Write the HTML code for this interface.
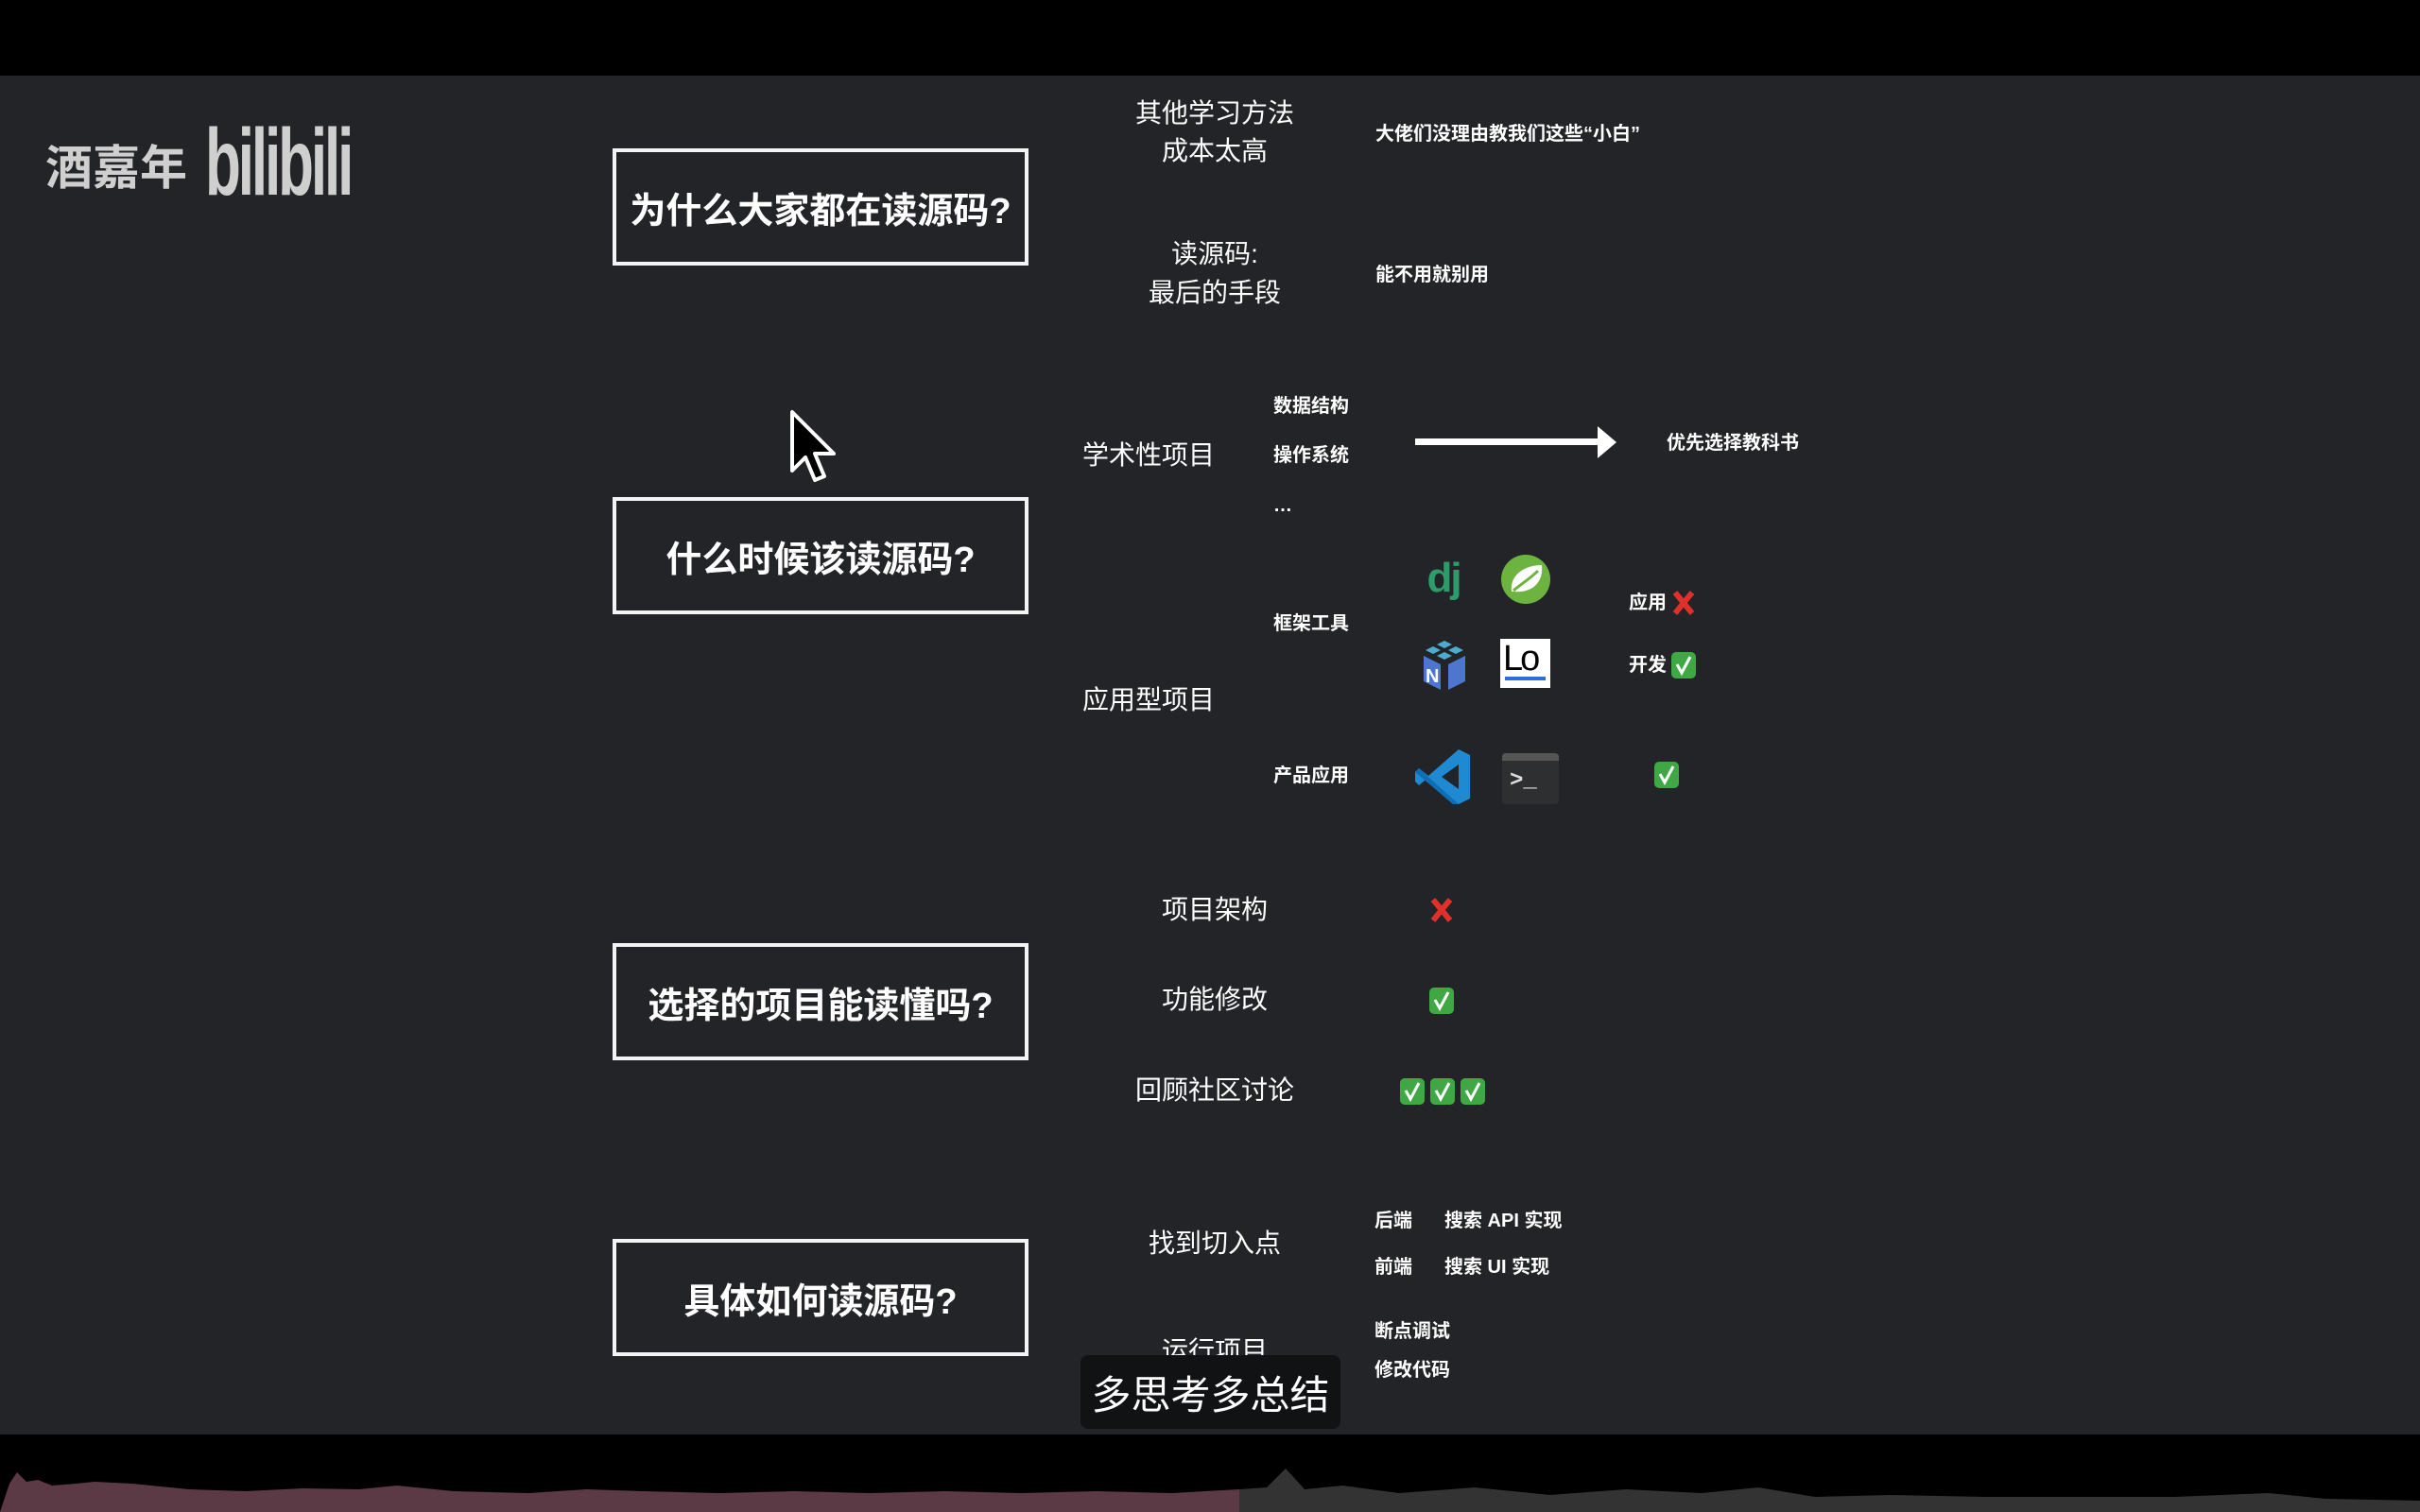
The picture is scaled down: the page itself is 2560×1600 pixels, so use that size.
<!DOCTYPE html>
<html><head><meta charset="utf-8">
<style>
*{margin:0;padding:0;box-sizing:border-box}
body{width:2560px;height:1600px;background:#000;overflow:hidden;position:relative;font-family:"Liberation Sans","Noto Sans CJK SC",sans-serif;color:#fff}
#main{position:absolute;left:0;top:80px;width:2560px;height:1438px;background:#232427}
.t{position:absolute;line-height:1;white-space:nowrap;transform:translateY(-50%)}
.c{transform:translate(-50%,-50%)}
.b{position:absolute;left:648px;width:440px;height:124px;border:4px solid #f4f4f4;display:flex;align-items:center;justify-content:center;font-size:38px;font-weight:bold}
.s{font-size:20px;font-weight:bold}
.m{font-size:28px}
.ok{position:absolute;width:26px;height:28px;background:#3fa845;border-radius:5px;transform:translate(-50%,-50%)}
.ok svg{position:absolute;left:0;top:0}
.no{position:absolute;transform:translate(-50%,-50%)}
</style></head><body>
<div id="main"></div>
<!-- logo -->
<div class="t" style="left:48px;top:178px;font-size:50px;font-weight:bold;color:#cfcfcf">酒嘉年</div>
<div class="t" style="left:217px;top:172px;font-size:100px;font-weight:bold;color:#cfcfcf;letter-spacing:-5px;transform:translateY(-50%) scaleX(.62);transform-origin:left">bilibili</div>

<div class="b" style="top:157px">为什么大家都在读源码?</div>
<div class="b" style="top:526px">什么时候该读源码?</div>
<div class="b" style="top:998px">选择的项目能读懂吗?</div>
<div class="b" style="top:1311px">具体如何读源码?</div>

<!-- cursor -->
<svg style="position:absolute;left:834px;top:432px" width="56" height="84" viewBox="0 0 28 42"><path d="M2 2 L2 33 L9 26 L14 38 L19 36 L14 24 L24 24 Z" fill="#000" stroke="#fff" stroke-width="2" stroke-linejoin="round"/></svg>

<div class="t c m" style="left:1285px;top:120px">其他学习方法</div>
<div class="t c m" style="left:1285px;top:160px">成本太高</div>
<div class="t s" style="left:1455px;top:142px">大佬们没理由教我们这些“小白”</div>
<div class="t c m" style="left:1285px;top:269px">读源码:</div>
<div class="t c m" style="left:1285px;top:310px">最后的手段</div>
<div class="t s" style="left:1455px;top:291px">能不用就别用</div>

<div class="t m" style="left:1145px;top:482px">学术性项目</div>
<div class="t s" style="left:1347px;top:430px">数据结构</div>
<div class="t s" style="left:1347px;top:482px">操作系统</div>
<div class="t s" style="left:1347px;top:535px">…</div>
<div style="position:absolute;left:1497px;top:464px;width:195px;height:7px;background:#fff"></div>
<svg style="position:absolute;left:1690px;top:451px" width="20" height="34"><path d="M0 0 L20 17 L0 34 Z" fill="#fff"/></svg>
<div class="t s" style="left:1763px;top:469px">优先选择教科书</div>

<div class="t m" style="left:1145px;top:741px">应用型项目</div>
<div class="t s" style="left:1347px;top:660px">框架工具</div>
<div class="t s" style="left:1347px;top:821px">产品应用</div>
<!-- dj -->
<div class="t c" style="left:1527px;top:612px;font-size:44px;font-weight:bold;color:#2d9c6a;letter-spacing:-2px">dj</div>
<!-- spring -->
<svg style="position:absolute;left:1587px;top:586px" width="54" height="54" viewBox="0 0 54 54"><circle cx="27" cy="27" r="26" fill="#6db33f"/><path d="M12 40 C10 22 26 12 44 12 C46 30 34 42 14 40 Z" fill="#fff"/><path d="M14 39 C22 32 32 26 40 18" stroke="#6db33f" stroke-width="3" fill="none"/></svg>
<!-- numpy -->
<svg style="position:absolute;left:1502px;top:676px" width="52" height="56" viewBox="0 0 52 56"><g fill="#4dabcf"><path d="M26 2 L34 6 L26 10 L18 6Z"/><path d="M14 8 L22 12 L14 16 L6 12Z"/><path d="M38 8 L46 12 L38 16 L30 12Z"/><path d="M26 14 L34 18 L26 22 L18 18Z"/></g><g fill="#4d77cf"><path d="M4 18 L22 27 L22 54 L4 45Z"/><path d="M30 27 L48 18 L48 45 L30 54Z"/></g><text x="6" y="46" font-size="20" font-weight="bold" fill="#fff" font-family="Liberation Sans">N</text></svg>
<!-- Lo -->
<div style="position:absolute;left:1587px;top:676px;width:53px;height:52px;background:#fff"><div style="position:absolute;left:3px;top:2px;font-size:38px;color:#000;letter-spacing:-3px;line-height:1">Lo</div><div style="position:absolute;left:5px;right:5px;bottom:8px;height:4px;background:#2f6bdc"></div></div>
<div class="t s" style="left:1723px;top:638px">应用</div>
<svg class="no" style="left:1781px;top:638px" width="26" height="28"><path d="M4 3 L22 25 M22 3 L4 25" stroke="#e0302b" stroke-width="6"/></svg>
<div class="t s" style="left:1723px;top:704px">开发</div>
<div class="ok" style="left:1781px;top:704px"><svg width="26" height="28"><path d="M6 13 L11 22 L20 5" stroke="#fff" stroke-width="3" fill="none"/></svg></div>
<!-- vscode -->
<svg style="position:absolute;left:1497px;top:791px" width="62" height="62" viewBox="0 0 62 62"><path d="M46 2 L58 8 L58 54 L46 60 L14 32 L4 40 L0 36 L0 26 L4 22 L14 30 Z M46 18 L28 31 L46 44 Z" fill="#1f8ad2"/><path d="M4 22 L46 60 L40 60 L0 26Z" fill="#0f6db5"/></svg>
<!-- terminal -->
<div style="position:absolute;left:1589px;top:797px;width:60px;height:54px;background:#2e2f30;border-radius:4px;overflow:hidden"><div style="height:8px;background:#555"></div><div style="position:absolute;left:8px;top:16px;color:#ddd;font-size:24px;font-weight:bold;font-family:'Liberation Mono'">&gt;_</div></div>
<div class="ok" style="left:1763px;top:820px"><svg width="26" height="28"><path d="M6 13 L11 22 L20 5" stroke="#fff" stroke-width="3" fill="none"/></svg></div>

<div class="t c m" style="left:1285px;top:963px">项目架构</div>
<svg class="no" style="left:1525px;top:963px" width="26" height="28"><path d="M4 3 L22 25 M22 3 L4 25" stroke="#e0302b" stroke-width="6"/></svg>
<div class="t c m" style="left:1285px;top:1058px">功能修改</div>
<div class="ok" style="left:1525px;top:1059px"><svg width="26" height="28"><path d="M6 13 L11 22 L20 5" stroke="#fff" stroke-width="3" fill="none"/></svg></div>
<div class="t c m" style="left:1285px;top:1154px">回顾社区讨论</div>
<div class="ok" style="left:1494px;top:1155px"><svg width="26" height="28"><path d="M6 13 L11 22 L20 5" stroke="#fff" stroke-width="3" fill="none"/></svg></div>
<div class="ok" style="left:1526px;top:1155px"><svg width="26" height="28"><path d="M6 13 L11 22 L20 5" stroke="#fff" stroke-width="3" fill="none"/></svg></div>
<div class="ok" style="left:1558px;top:1155px"><svg width="26" height="28"><path d="M6 13 L11 22 L20 5" stroke="#fff" stroke-width="3" fill="none"/></svg></div>

<div class="t c m" style="left:1285px;top:1316px">找到切入点</div>
<div class="t s" style="left:1454px;top:1292px">后端</div>
<div class="t s" style="left:1528px;top:1292px">搜索 API 实现</div>
<div class="t s" style="left:1454px;top:1341px">前端</div>
<div class="t s" style="left:1528px;top:1341px">搜索 UI 实现</div>
<div class="t c m" style="left:1285px;top:1430px">运行项目</div>
<div class="t s" style="left:1454px;top:1409px">断点调试</div>
<div class="t s" style="left:1454px;top:1450px">修改代码</div>

<div style="position:absolute;left:1143px;top:1434px;width:275px;height:78px;background:#111214;border-radius:8px;display:flex;align-items:center;justify-content:center;font-size:42px">多思考多总结</div>

<!-- waveform -->
<svg style="position:absolute;left:0;top:1540px" width="2560" height="60" viewBox="0 0 2560 60"><path d="M0 60 L10 30 L18 18 L28 28 L40 26 L55 32 L80 30 L100 28 L140 30 L200 36 L260 38 L320 35 L380 36 L420 32 L480 38 L560 40 L620 36 L680 38 L760 40 L840 38 L920 40 L1000 38 L1080 40 L1160 38 L1240 40 L1311 36 L1311 60Z" fill="#5b3a45"/><path d="M1311 60 L1311 36 L1340 34 L1360 14 L1380 36 L1420 32 L1480 40 L1560 34 L1640 42 L1720 36 L1800 40 L1860 34 L1920 44 L2000 42 L2100 44 L2200 44 L2300 44 L2400 40 L2460 46 L2560 48 L2560 60Z" fill="#333"/></svg>
</body></html>
